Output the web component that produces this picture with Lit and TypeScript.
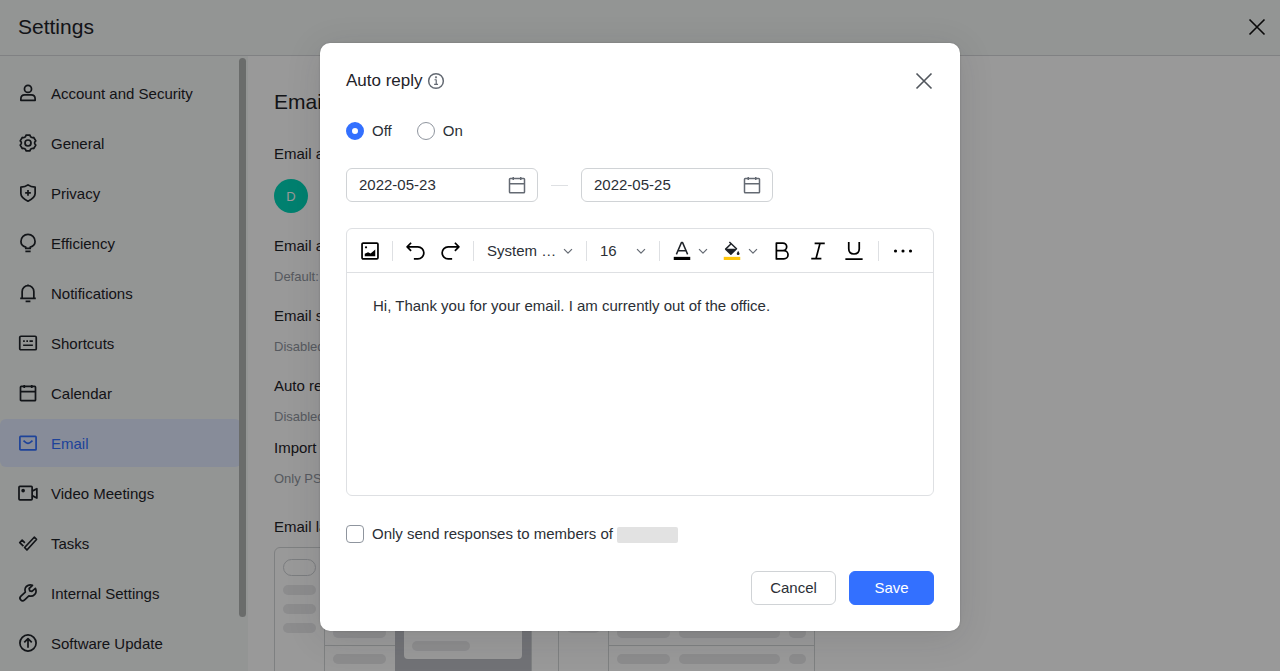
import { LitElement, html, css, svg } from "lit";
import { customElement, state } from "lit/decorators.js";

const icons: Record<string, unknown> = {
  user: svg`<circle cx="12" cy="6.500" r="4.700"/><path d="M2.500 21.800v-2.300c0-3.300 2.300-5.100 5.200-5.100h8.600c2.900 0 5.200 1.800 5.200 5.100v2.300z"/>`,
  gear: svg`<circle cx="12" cy="12" r="4"/><path d="M9.400 1.500h5.200c.5 2.900 2.500 4 5 3.100l2.800 4.600c-2.200 2-2.200 3.600 0 5.600l-2.800 4.600c-2.500-.9-4.500.2-5 3.100H9.400c-.5-2.900-2.500-4-5-3.100l-2.800-4.600c2.200-2 2.200-3.600 0-5.600l2.800-4.600c2.500.9 4.500-.2 5-3.100z"/>`,
  shield: svg`<path d="M12 1.200c3 2.300 6 2.900 9.500 3v8.600c0 4.500-4.200 7.600-9.500 10.200-5.300-2.600-9.500-5.700-9.500-10.200V4.200c3.500-.100 6.500-.700 9.500-3z"/><path d="M12 8v7.600M8.200 11.800h7.600"/>`,
  bulb: svg`<path d="M9 19.300v-1.900C5.200 16.300 2.600 13.500 2.600 9.900a9.400 9.400 0 0 1 18.800 0c0 3.600-2.600 6.400-6.400 7.500v1.900z"/><path d="M8.500 23.200h7"/>`,
  bell: svg`<path d="M4.200 19V10a7.800 7.800 0 0 1 15.600 0v9M1.600 19.200h20.800M8.800 23.200h6.400M12 .8v1.600"/>`,
  keyboard: svg`<rect x="1" y="3" width="22" height="18" rx="1.500"/><path d="M5.500 9.500h2.200M9.800 9.500h2.200M14 9.500h4.500M5.500 15h13"/>`,
  calendar: svg`<rect x="2" y="3.300" width="20" height="19" rx="1"/><path d="M2 10.200h20M7 1.300v4M17 1.300v4"/>`,
  mail: svg`<rect x="1.200" y="3.200" width="21.600" height="18" rx="1"/><path d="M6 8.700c3 2.700 4.500 3.700 6 3.700s3-1 6-3.700"/>`,
  video: svg`<rect x="0" y="3.200" width="17.500" height="18" rx="1.200"/><path d="M17.500 9.500l6.300-3.300v12.600l-6.300-3.300"/><circle cx="5.500" cy="8.800" r="1.300" fill="currentColor"/>`,
  tasks: svg`<path d="M7.500 18L20.300 4.300l3 3L10.600 21.300zM5.900 16.200L1 11.500l3.200-3.200 3.600 3.600"/>`,
  wrench: svg`<path d="M21.900 5.700l-4.700 4.200-2.900-.700-.8-3.200 4.500-4.200c-4-1.500-8.300.2-9.600 3.600-.7 1.900-.6 3.600 0 5.300L2.600 16.300c-1.700 1.700-1.700 3.600-.300 5s3.600 1.400 5.200-.1l5.700-5.400c2.600.9 5.400.4 7.500-1.700 2.200-2.200 2.500-5.500 1.200-8.400z"/><path d="M5.500 18.300v.1"/>`,
  update: svg`<circle cx="12" cy="12" r="10.800"/><path d="M12 18.300V6.500M7 11.300l5-5 5 5"/>`,
  close: svg`<path d="M3 3l18 18M21 3L3 21"/>`,
  info: svg`<circle cx="12" cy="12" r="9.800"/><path d="M10 10.300h2.300v6M9.500 16.500h5.200" stroke-width="1.600"/><circle cx="12" cy="7" r=".5" fill="currentColor"/>`,
  image: svg`<rect x="1.400" y="1.400" width="21.200" height="21.200" rx="1.500"/><path d="M5 19v-3.300l4.400-2 3.400 1.500L19 10v9z" fill="currentColor" stroke="none"/><circle cx="6.700" cy="7" r="1.500" fill="currentColor" stroke="none"/>`,
  undo: svg`<path d="M6.800 1L1.500 6.400l5.300 5.300M1.800 6.400h14a8 8 0 0 1 0 16H10.500"/>`,
  redo: svg`<path d="M17.200 1l5.300 5.400-5.300 5.300M22.200 6.400h-14a8 8 0 0 0 0 16H13.500"/>`,
  down: svg`<path d="M2.500 7.500L12 17l9.500-9.500"/>`,
  color: svg`<path d="M4.500 16.500L11.200.8h1.600l6.700 15.700M7 11.500h10" stroke-width="2"/><path d="M1 19.800h22V24H1z" fill="#000" stroke="none"/>`,
  fill: svg`<path d="M8.500 0L18 9l-7.500 7.300L3.500 9.500l7-6.900" stroke-width="2"/><path d="M3.500 9h14.500l-7.500 7.300z" fill="currentColor" stroke="none"/><path d="M20.200 11.800l1.600 2.700a1.900 1.900 0 1 1-3.200 0z" fill="currentColor" stroke="none"/><path d="M1 19.800h22V24H1z" fill="#ffc60a" stroke="none"/>`,
  bold: svg`<path d="M4.500 1.400h8.700a5 5 0 0 1 0 10.100H4.500zM4.500 11.500h10a5.500 5.500 0 0 1 0 11.100h-10z"/>`,
  italic: svg`<path d="M7.500 1.800h13.500M3 22.200h13.500M14.700 1.800L9.300 22.200"/>`,
  underline: svg`<path d="M5 0v9c0 4.400 2.700 7 7 7s7-2.600 7-7V0M.5 22.800h23"/>`,
  more: svg`<circle cx="2" cy="12" r="2.100" fill="currentColor" stroke="none"/><circle cx="12" cy="12" r="2.100" fill="currentColor" stroke="none"/><circle cx="22" cy="12" r="2.100" fill="currentColor" stroke="none"/>`,
};

const icon = (name: string, size = "md") => html`<svg class="icon ${size}" viewBox="0 0 24 24" aria-hidden="true">${icons[name]}</svg>`;

const NAV = [
  ["user", "Account and Security"],
  ["gear", "General"],
  ["shield", "Privacy"],
  ["bulb", "Efficiency"],
  ["bell", "Notifications"],
  ["keyboard", "Shortcuts"],
  ["calendar", "Calendar"],
  ["mail", "Email"],
  ["video", "Video Meetings"],
  ["tasks", "Tasks"],
  ["wrench", "Internal Settings"],
  ["update", "Software Update"],
];

const SECTIONS = [
  ["Email alias", "Default: none", ""],
  ["Email sign", "Disabled", ""],
  ["Auto reply", "Disabled", "tight"],
  ["Import", "Only PST", "wide"],
];

const base = css`
  * { box-sizing: border-box; }
  .icon { display: block; flex: none; overflow: visible; fill: none; stroke: currentColor; stroke-width: 2.300; stroke-linejoin: round; }
  .xs { width: 10px; height: 10px; stroke-width: 3; }
  .md { width: 18px; height: 18px; }
  .cross { width: 20px; height: 20px; stroke-width: 2; }
  button, input, select { font: inherit; color: inherit; }
  button { padding: 0; border: 0; background: none; cursor: pointer; display: flex; align-items: center; justify-content: center; }
`;

@customElement("settings-page")
export class SettingsPage extends LitElement {
  static styles = [base, css`
    :host { display: flex; flex-direction: column; height: 100%; overflow: hidden; background: #fff; color: #1f2329; }
    header { display: flex; align-items: center; justify-content: space-between; flex: none; height: 56px; padding: 0 13px 2px 18px; background: #f5f8f7; border-bottom: 1px solid #d5d7da; }
    h1, h2, h3 { margin: 0; font-weight: 400; }
    h1, h2 { font-size: 21px; line-height: 26px; }
    .cross { color: #111; }
    .body { display: flex; flex: 1; min-height: 0; }
    .side { display: flex; width: 248px; flex: none; background: #f5f8f7; overflow: hidden; }
    nav { flex: 1; padding-top: 13px; }
    .nav { display: flex; align-items: center; gap: 14px; height: 48px; margin-bottom: 2px; padding-left: 19px; border-radius: 6px; color: inherit; text-decoration: none; font-size: 15px; }
    .nav.on { background: #e1eaff; color: #3370ff; }
    .bar { width: 7px; height: 559px; margin: 2px 2px 0 -2px; border-radius: 4px; background: #b1b4b3; }
    main { flex: 1; min-width: 0; padding: 33px 26px 0; }
    h3 { font-size: 15px; line-height: 20px; }
    .address { margin-top: 29px; }
    .avatar { display: flex; align-items: center; justify-content: center; width: 34px; height: 34px; margin: 15px 0 23px; border-radius: 50%; background: #00d6b9; color: #fff; font-size: 13px; }
    .note { margin: 12px 0 20px; font-size: 13px; line-height: 18px; color: #8f959e; }
    .note.tight { margin-bottom: 12px; }
    .note.wide { margin-bottom: 29px; }
    .layouts { display: flex; gap: 26px; margin-top: 10px; }
    .card { display: flex; height: 190px; border: 1px solid #d3d5d8; border-radius: 6px; overflow: hidden; }
    .rail { width: 49px; padding: 11px 8px; display: flex; flex-direction: column; gap: 9px; }
    .pill { height: 10px; border-radius: 5px; background: #e9e9ec; }
    .pill.outline { height: 17px; border-radius: 9px; border: 1px solid #cdd0d4; background: none; }
    .list { width: 71px; padding-top: 20px; border-left: 1px solid #d3d5d8; }
    .list.full { width: 206px; }
    .line { height: 26px; display: flex; align-items: center; gap: 9px; padding: 0 8px; border-bottom: 1px solid #d3d5d8; }
    .p1 { width: 53px; }
    .p2 { width: 101px; }
    .p3 { width: 17px; }
    .p4 { width: 58px; }
    .preview { width: 136px; padding: 0 9px; background: #bcbfc5; }
    .sheet { display: flex; align-items: flex-end; height: 111px; padding: 8px; border-radius: 0 0 4px 4px; background: #fff; }
  `];

  private lines(n: number, full: boolean) {
    return Array.from({ length: n }, () => html`<div class="line"><span class="pill p1"></span>${full ? html`<span class="pill p2"></span><span class="pill p3"></span>` : ""}</div>`);
  }

  render() {
    const rail = html`<div class="rail"><div class="pill outline"></div><div class="pill"></div><div class="pill"></div><div class="pill"></div></div>`;
    return html`
      <header><h1>Settings</h1><button aria-label="Close settings">${icon("close", "cross")}</button></header>
      <div class="body">
        <div class="side">
          <nav>${NAV.map(([i, label]) => html`<a href="#" class="nav ${label === "Email" ? "on" : ""}">${icon(i)}<span>${label}</span></a>`)}</nav>
          <div class="bar"></div>
        </div>
        <main>
          <h2>Email</h2>
          <h3 class="address">Email account</h3>
          <div class="avatar">D</div>
          ${SECTIONS.map(([title, note, gap]) => html`<h3>${title}</h3><p class="note ${gap}">${note}</p>`)}
          <h3>Email layout</h3>
          <div class="layouts">
            <div class="card">${rail}<div class="list">${this.lines(6, false)}</div><div class="preview"><div class="sheet"><span class="pill p4"></span></div></div></div>
            <div class="card">${rail}<div class="list full">${this.lines(6, true)}</div></div>
          </div>
        </main>
      </div>`;
  }
}

@customElement("auto-reply-dialog")
export class AutoReplyDialog extends LitElement {
  @state() private mode = "off";

  static styles = [base, css`
    :host { display: block; box-sizing: border-box; width: 640px; max-width: 100%; padding: 25px 26px 26px; border-radius: 10px; background: #fff; color: #2b2f36; font-size: 15px; line-height: 20px; box-shadow: 0 6px 36px rgba(31, 35, 41, .12), 0 0 2px rgba(0, 0, 0, .2); }
    .head { display: flex; align-items: center; gap: 4px; height: 26px; }
    h2 { margin: 0; font-size: 17px; font-weight: 400; color: #1f2329; }
    .head .md, .date .md { color: #646a73; stroke-width: 2; }
    .exit { margin-left: auto; color: #51565d; }
    .modes { display: flex; gap: 25px; margin: 27px 0; border: 0; padding: 0; }
    label { display: flex; align-items: center; gap: 8px; }
    .choice { appearance: none; flex: none; width: 18px; height: 18px; margin: 0; border: 1px solid #8f959e; background: #fff; }
    .choice[type="radio"] { border-radius: 50%; }
    .choice[type="checkbox"] { border-radius: 4px; }
    .choice:checked { border: 6px solid #3370ff; }
    .dates { display: flex; align-items: center; gap: 13px; }
    .date { width: 192px; height: 34px; padding: 0 11px 0 12px; border: 1px solid #d0d3d6; border-radius: 6px; }
    .date input { flex: 1; min-width: 0; padding: 0; border: 0; outline: 0; background: none; }
    .dash { width: 17px; height: 1px; background: #dee0e3; }
    .editor { margin-top: 26px; border: 1px solid #dee0e3; border-radius: 6px; }
    .tools { display: flex; align-items: center; height: 44px; padding: 0 21px 0 14px; border-bottom: 1px solid #dee0e3; color: #000; }
    .sep { flex: none; width: 1px; height: 20px; background: #dee0e3; }
    .gap { margin: 0 13px; }
    .pick { display: flex; align-items: center; gap: 4px; color: #2b2f36; }
    .pick select { appearance: none; flex: 1; min-width: 0; padding: 0; border: 0; outline: 0; background: none; }
    .font { width: 86px; }
    .size { width: 46px; }
    .pick .xs, .tool .xs { color: #646a73; }
    .tool { gap: 7px; color: #1f2329; }
    .group { display: flex; gap: 18px; }
    .styles { display: flex; align-items: center; justify-content: space-between; flex: 1; }
    .text { min-height: 222px; padding: 23px 26px; outline: 0; }
    .text p { margin: 0; }
    .only { margin-top: 28px; }
    .org { display: inline-block; width: 61px; height: 16px; border-radius: 2px; background: #e2e2e2; vertical-align: middle; margin-left: 4px; }
    .actions { display: flex; justify-content: flex-end; gap: 13px; margin-top: 27px; }
    .action { width: 85px; height: 34px; border: 1px solid #d0d3d6; border-radius: 6px; }
    .save { background: #3370ff; border-color: #3370ff; color: #fff; }
  `];

  private radio(value: string, label: string) {
    return html`<label><input class="choice" type="radio" name="mode" .checked=${this.mode === value} @change=${() => (this.mode = value)}>${label}</label>`;
  }

  private date(label: string, value: string) {
    return html`<label class="date"><input aria-label=${label} .value=${value}>${icon("calendar")}</label>`;
  }

  render() {
    return html`
      <div class="head"><h2>Auto reply</h2>${icon("info")}<button class="exit" aria-label="Close">${icon("close", "cross")}</button></div>
      <fieldset class="modes" aria-label="Auto reply mode">${this.radio("off", "Off")}${this.radio("on", "On")}</fieldset>
      <div class="dates">${this.date("Start date", "2022-05-23")}<span class="dash"></span>${this.date("End date", "2022-05-25")}</div>
      <div class="editor">
        <div class="tools">
          <button aria-label="Insert image">${icon("image")}</button>
          <span class="sep gap"></span>
          <div class="group"><button aria-label="Undo">${icon("undo")}</button><button aria-label="Redo">${icon("redo")}</button></div>
          <span class="sep gap"></span>
          <div class="pick font"><select aria-label="Font"><option>System …</option></select>${icon("down", "xs")}</div>
          <span class="sep gap"></span>
          <div class="pick size"><select aria-label="Font size"><option>16</option></select>${icon("down", "xs")}</div>
          <span class="sep gap"></span>
          <div class="styles">
            <button class="tool" aria-label="Text color">${icon("color")}${icon("down", "xs")}</button>
            <button class="tool" aria-label="Highlight color">${icon("fill")}${icon("down", "xs")}</button>
            <div class="group">
              <button aria-label="Bold">${icon("bold")}</button>
              <button aria-label="Italic">${icon("italic")}</button>
              <button aria-label="Underline">${icon("underline")}</button>
            </div>
            <span class="sep"></span>
            <button aria-label="More">${icon("more")}</button>
          </div>
        </div>
        <div class="text" contenteditable="true" role="textbox" aria-label="Reply message"><p>Hi, Thank you for your email. I am currently out of the office.</p></div>
      </div>
      <label class="only"><input class="choice" type="checkbox"><span>Only send responses to members of<span class="org"></span></span></label>
      <div class="actions"><button class="action">Cancel</button><button class="action save">Save</button></div>`;
  }
}

@customElement("app-root")
export class AppRoot extends LitElement {
  static styles = css`
    :host { display: block; position: relative; height: 100vh; overflow: hidden; font-family: "Liberation Sans", Arial, sans-serif; }
    .mask { position: absolute; inset: 0; display: grid; place-items: center; padding-top: 3px; background: rgba(0, 0, 0, .4); }
  `;

  render() {
    return html`<settings-page></settings-page><div class="mask"><auto-reply-dialog role="dialog" aria-label="Auto reply"></auto-reply-dialog></div>`;
  }
}
